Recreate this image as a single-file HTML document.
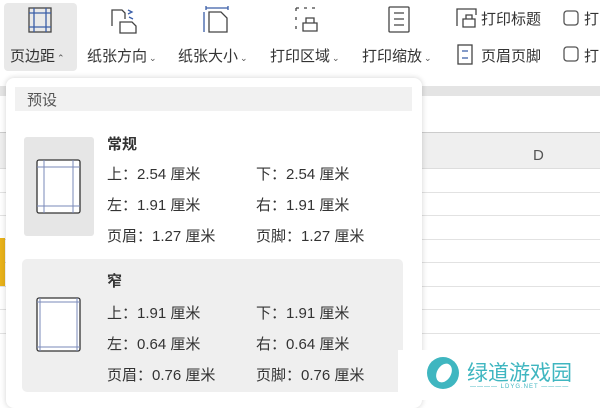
<!DOCTYPE html>
<html><head><meta charset="utf-8"><style>
*{margin:0;padding:0;box-sizing:border-box}
body{width:600px;height:400px;overflow:hidden;background:#fff;position:relative;font-family:"Liberation Sans","Noto Sans CJK SC",sans-serif;color:#333}
.a{position:absolute}
.lbl{position:absolute;top:45px;font-size:15px;color:#333;white-space:nowrap}
.lbl small{font-size:9px;color:#555;margin-left:2px}
.t{position:absolute;font-size:15px;color:#333;white-space:nowrap}
.hl{position:absolute;left:0;width:600px;height:1px;background:#e2e2e2}
</style></head><body>
<div class="a" style="left:4px;top:3px;width:73px;height:68px;background:#e9e9e9;border-radius:4px"></div>
<svg class="a" style="left:0;top:0" width="600" height="80" fill="none" stroke="#444" stroke-width="1.3">
<rect x="29" y="8" width="22" height="24"/><line x1="34" y1="8" x2="34" y2="32" stroke="#3a5ea8"/><line x1="46" y1="8" x2="46" y2="32" stroke="#3a5ea8"/><line x1="29" y1="13" x2="51" y2="13" stroke="#3a5ea8"/><line x1="29" y1="27" x2="51" y2="27" stroke="#3a5ea8"/>
<path d="M112 26V10h10l3 3v6"/><path d="M120 33V22h12l4 4v7z"/><path d="M128 10l4 2-4 2M133 19l-4-2" stroke="#3a5ea8"/>
<path d="M206 8h22M206 6v4M228 6v4" stroke="#3a5ea8"/><path d="M204 12v20" stroke="#3a5ea8"/><path d="M209 32V12h12l6 6v14z"/>
<path d="M296 8h4M304 8h4M312 8h4M296 8v5M296 17v5M296 26v5" stroke-dasharray="3 2"/><path d="M303 23h14v8h-14zM306 23v-5h8v5"/>
<rect x="389" y="7" width="20" height="25" rx="1"/><path d="M394 13h10M394 19h10M394 25h10"/>
<path d="M457 26V9h19v6"/><path d="M463 19h12v8h-12zM466 19v-4h6v4"/>
<rect x="458" y="45" width="14" height="19"/><path d="M462 51h6M462 58h6" stroke="#3a5ea8"/>
<rect x="564" y="11" width="14" height="14" rx="3" stroke="#555"/><rect x="564" y="47" width="14" height="14" rx="3" stroke="#555"/>
</svg>
<div class="lbl" style="left:10px">页边距<small>⌃</small></div>
<div class="lbl" style="left:87px">纸张方向<small>⌄</small></div>
<div class="lbl" style="left:178px">纸张大小<small>⌄</small></div>
<div class="lbl" style="left:270px">打印区域<small>⌄</small></div>
<div class="lbl" style="left:362px">打印缩放<small>⌄</small></div>
<div class="t" style="left:481px;top:8px">打印标题</div>
<div class="t" style="left:481px;top:45px">页眉页脚</div>
<div class="t" style="left:584px;top:8px">打</div>
<div class="t" style="left:584px;top:45px">打</div>
<div class="a" style="left:0;top:86px;width:600px;height:10px;background:#e4e4e4"></div>
<div class="a" style="left:0;top:132px;width:600px;height:37px;background:#efefef;border-top:1px solid #ccc;border-bottom:1px solid #ddd"></div>
<div class="t" style="left:533px;top:147px;color:#555">D</div>
<div class="hl" style="top:192px"></div><div class="hl" style="top:215px"></div><div class="hl" style="top:239px"></div><div class="hl" style="top:262px"></div><div class="hl" style="top:286px"></div><div class="hl" style="top:309px"></div><div class="hl" style="top:333px"></div>
<div class="a" style="left:0;top:238px;width:5px;height:48px;background:#e8b21a"></div>
<div class="a" style="left:6px;top:78px;width:416px;height:330px;background:#fff;border-radius:8px;box-shadow:0 0 6px rgba(0,0,0,.18)"></div>
<div class="a" style="left:15px;top:87px;width:397px;height:24px;background:#f1f1f1"></div>
<div class="t" style="left:27px;top:89px;color:#555">预设</div>
<div class="a" style="left:24px;top:137px;width:70px;height:99px;background:#e6e6e6;border-radius:3px"></div>
<div class="a" style="left:22px;top:259px;width:381px;height:133px;background:#efefef;border-radius:5px"></div>
<svg class="a" style="left:0;top:0" width="420" height="400" fill="none">
<rect x="37" y="160" width="43" height="53" rx="2" fill="#fff" stroke="#333" stroke-width="1.3"/>
<path d="M37 167h43M37 206h43M44 160v53M73 160v53" stroke="#7a8ab8"/>
<rect x="37" y="298" width="43" height="53" rx="2" fill="#fff" stroke="#333" stroke-width="1.3"/>
<path d="M37 302h43M37 347h43M40 298v53M77 298v53" stroke="#7a8ab8"/>
</svg>
<div class="t" style="left:107px;top:133px;font-weight:bold">常规</div>
<div class="t" style="left:107px;top:163px">上：2.54 厘米</div><div class="t" style="left:256px;top:163px">下：2.54 厘米</div>
<div class="t" style="left:107px;top:194px">左：1.91 厘米</div><div class="t" style="left:256px;top:194px">右：1.91 厘米</div>
<div class="t" style="left:107px;top:225px">页眉：1.27 厘米</div><div class="t" style="left:256px;top:225px">页脚：1.27 厘米</div>
<div class="t" style="left:107px;top:270px;font-weight:bold">窄</div>
<div class="t" style="left:107px;top:302px">上：1.91 厘米</div><div class="t" style="left:256px;top:302px">下：1.91 厘米</div>
<div class="t" style="left:107px;top:333px">左：0.64 厘米</div><div class="t" style="left:256px;top:333px">右：0.64 厘米</div>
<div class="t" style="left:107px;top:364px">页眉：0.76 厘米</div><div class="t" style="left:256px;top:364px">页脚：0.76 厘米</div>
<div class="a" style="left:398px;top:350px;width:202px;height:50px;background:#fff"></div>
<svg class="a" style="left:425px;top:355px" width="38" height="38"><circle cx="18" cy="18" r="16" fill="#3fb6c0"/><ellipse cx="19" cy="18" rx="7" ry="10" transform="rotate(30 19 18)" fill="#fff"/></svg>
<div class="t" style="left:467px;top:357px;font-size:21px;color:#3fb6c0">绿道游戏园</div>
<div class="t" style="left:470px;top:384px;font-size:6px;color:#3fb6c0;letter-spacing:1px">———— LDYG.NET ————</div>
</body></html>
